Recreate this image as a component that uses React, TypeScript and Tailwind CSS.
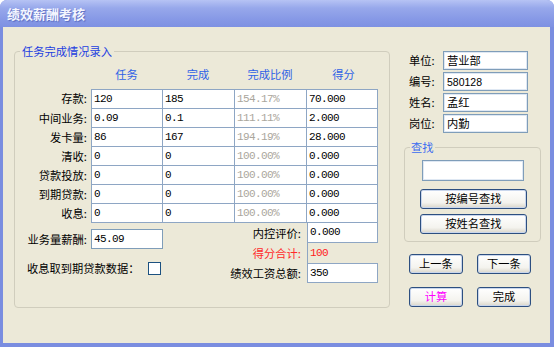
const cjk = "font-['Noto_Sans_CJK_SC',sans-serif]";
const mono = "font-['Liberation_Mono',monospace] text-[11px] tracking-[-0.6px]";

const rows = [
  ["存款:", "120", "185", "154.17%", "70.000"],
  ["中间业务:", "0.09", "0.1", "111.11%", "2.000"],
  ["发卡量:", "86", "167", "194.19%", "28.000"],
  ["清收:", "0", "0", "100.00%", "0.000"],
  ["贷款投放:", "0", "0", "100.00%", "0.000"],
  ["到期贷款:", "0", "0", "100.00%", "0.000"],
  ["收息:", "0", "0", "100.00%", "0.000"],
];

const info = [
  ["单位:", "营业部"],
  ["编号:", "580128"],
  ["姓名:", "孟红"],
  ["岗位:", "内勤"],
];

function Btn({ label, w, color }: { label: string; w: string; color?: string }) {
  return (
    <div
      className={`${w} h-[20px] flex items-center justify-center rounded-[3px] border border-[#2d4f80] bg-[linear-gradient(#ffffff,#f4f3ee_70%,#d9d5c9)] shadow-[inset_0_0_0_1px_#c9d6ec] text-[11.25px] leading-none ${color ?? "text-black"}`}
    >
      {label}
    </div>
  );
}

export default function App() {
  return (
    <div className={`w-[554px] h-[347px] bg-white ${cjk}`}>
      <div className="h-full flex flex-col rounded-t-[7px] overflow-hidden bg-[#7a8de0]">
        {/* title bar */}
        <div className="h-[27px] shrink-0 flex items-center px-[7px] bg-[linear-gradient(#b6c3f4,#97a8eb_30%,#8799e6_70%,#7e91e2)]">
          <span className="text-[13px] font-bold text-[#f4f6ff] [text-shadow:1px_1px_1px_#5a6cc0]">绩效薪酬考核</span>
        </div>

        {/* body */}
        <div className="flex-1 ml-[3px] mr-[4px] mb-[4px] bg-[#ece9d8] flex items-start text-[11.25px] text-black">
          {/* left group */}
          <fieldset className="ml-[11px] mt-[17px] w-[376px] h-[264px] border border-[#d0cdbd] rounded-[4px]">
            <legend className="ml-[5px] px-[2px] text-[11.25px] leading-[14px] text-[#2340e0]">任务完成情况录入</legend>

            {/* headers */}
            <div className="mt-[8px] h-[16px] flex pl-[76px] text-[#2f62e6] leading-[16px]">
              <div className="w-[71px] text-center">任务</div>
              <div className="w-[72px] text-center">完成</div>
              <div className="w-[72px] text-center">完成比例</div>
              <div className="w-[71px] text-center pl-[4px]">得分</div>
            </div>

            {/* table */}
            <div className="mt-[7px] flex flex-col">
              {rows.map((r, i) => (
                <div key={r[0]} className="flex">
                  <div className="w-[76px] pr-[4px] text-right leading-[19px]">{r[0]}</div>
                  <div className={`flex border-l border-[#8ea6c4] ${i === 0 ? "border-t" : ""}`}>
                    <div className={`w-[71px] h-[19px] border-r border-b border-[#8ea6c4] bg-white pl-[2px] leading-[18px] ${mono}`}>{r[1]}</div>
                    <div className={`w-[72px] h-[19px] border-r border-b border-[#8ea6c4] bg-white pl-[2px] leading-[18px] ${mono}`}>{r[2]}</div>
                    <div className={`w-[72px] h-[19px] border-r border-b border-[#8ea6c4] bg-white pl-[2px] leading-[18px] text-[#aaa69c] ${mono}`}>{r[3]}</div>
                    <div className={`w-[71px] h-[19px] border-r border-b border-[#8ea6c4] bg-white pl-[2px] leading-[18px] ${mono}`}>{r[4]}</div>
                  </div>
                </div>
              ))}
            </div>

            {/* lower section */}
            <div className="flex items-start">
              <div className="flex flex-col">
                <div className="mt-[6px] flex items-center">
                  <div className="w-[76px] pr-[4px] text-right">业务量薪酬:</div>
                  <div className={`w-[72px] h-[20px] border border-[#7f9db9] bg-white pl-[2px] leading-[18px] ${mono}`}>45.09</div>
                </div>
                <div className="mt-[13px] flex items-center h-[13px]">
                  <div className="pl-[12px] leading-[13px]">收息取到期贷款数据：</div>
                  <div className="ml-[8px] w-[13px] h-[13px] border border-[#1c5180] bg-white" />
                </div>
              </div>

              <div className="ml-auto mr-[11px] w-[150px] flex flex-col">
                <div className="flex items-center">
                  <div className="flex-1 text-right pr-[6px]">内控评价:</div>
                  <div className={`w-[71px] h-[20px] border-l border-r border-b border-[#8ea6c4] bg-white pl-[2px] leading-[19px] ${mono}`}>0.000</div>
                </div>
                <div className="flex items-center">
                  <div className="flex-1 text-right pr-[6px] text-[#ff2a2a]">得分合计:</div>
                  <div className={`w-[71px] h-[20px] border-l border-[#8ea6c4] pl-[2px] leading-[20px] text-[#ff2020] ${mono}`}>100</div>
                </div>
                <div className="flex items-center">
                  <div className="flex-1 text-right pr-[6px]">绩效工资总额:</div>
                  <div className={`w-[71px] h-[20px] border border-[#8ea6c4] bg-white pl-[2px] leading-[18px] ${mono}`}>350</div>
                </div>
              </div>
            </div>
          </fieldset>

          {/* right panel */}
          <div className="ml-[14px] mt-[24px] w-[137px] flex flex-col">
            {info.map(([k, v]) => (
              <div key={k} className="flex items-center h-[19px] mb-[2px]">
                <div className="w-[39px] pl-[5px]">{k}</div>
                <div className="w-[85px] h-[19px] border border-[#7f9db9] bg-white pl-[3px] leading-[17px] shadow-[inset_0_0_0_1px_#dfe8f3]">
                  {k === "编号:" ? <span className="font-['Liberation_Sans',sans-serif] text-[10.5px]">{v}</span> : v}
                </div>
              </div>
            ))}

            <fieldset className="mt-[5px] w-[137px] h-[102px] border border-[#d0cdbd] rounded-[4px]">
              <legend className="ml-[5px] px-[1px] text-[11.25px] leading-[14px] text-[#3a6cf0]">查找</legend>
              <div className="mt-[6px] ml-[17px] w-[102px] h-[21px] border border-[#7f9db9] bg-white shadow-[inset_0_0_0_1px_#dfe8f3]" />
              <div className="mt-[8px] ml-[15px]">
                <Btn label="按编号查找" w="w-[107px]" />
              </div>
              <div className="mt-[5px] ml-[15px]">
                <Btn label="按姓名查找" w="w-[107px]" />
              </div>
            </fieldset>

            <div className="mt-[12px] ml-[5px] flex gap-[14px]">
              <Btn label="上一条" w="w-[54px]" />
              <Btn label="下一条" w="w-[54px]" />
            </div>
            <div className="mt-[13px] ml-[5px] flex gap-[14px]">
              <Btn label="计算" w="w-[54px]" color="text-[#ff00ff]" />
              <Btn label="完成" w="w-[54px]" />
            </div>
          </div>
        </div>
      </div>
    </div>
  );
}
